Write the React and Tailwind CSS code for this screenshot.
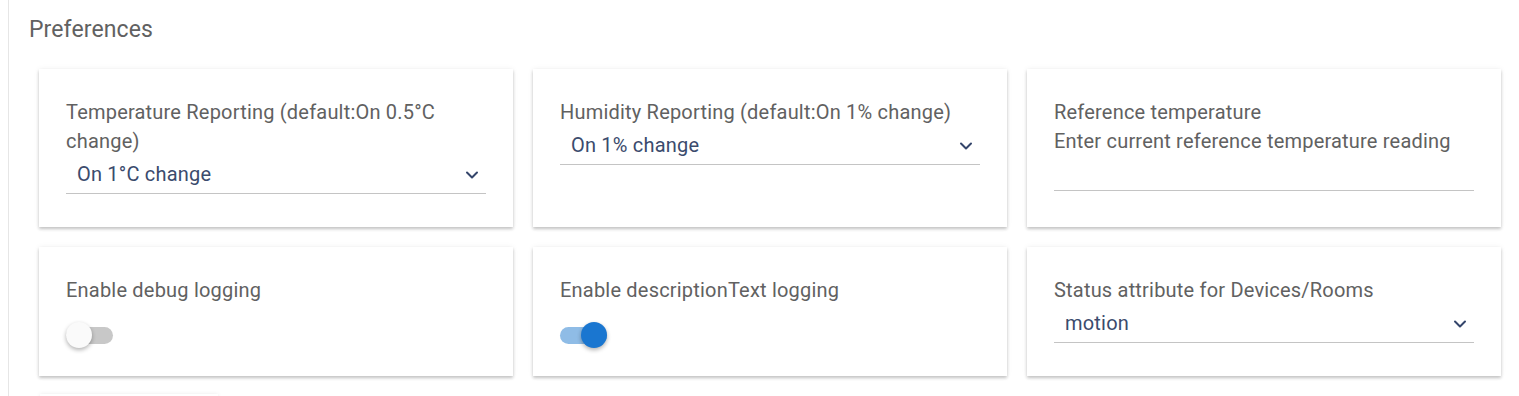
import React, { useState } from 'react'

function Chevron() {
  return (
    <svg className="w-[14px] h-[8px]" viewBox="0 0 14 8" fill="none" stroke="#34456b" strokeWidth="2" strokeLinecap="round" strokeLinejoin="round">
      <path d="M2 1.5l5 5 5-5" />
    </svg>
  )
}

function Card({ children }) {
  return (
    <div className="bg-white px-[27px] pt-[29px] pb-[33px] shadow-[0_2px_3px_rgba(0,0,0,0.22),0_0_6px_rgba(0,0,0,0.06)]">
      {children}
    </div>
  )
}

function Label({ children }) {
  return <div className="text-[20px] leading-[29px] tracking-[0.2px] text-[#616161]">{children}</div>
}

function Select({ value }) {
  return (
    <div className="flex items-center justify-between border-b border-[#c4c4c4] py-[4px] pl-[11px] pr-[7px]">
      <span className="text-[20px] leading-[29px] tracking-[0.2px] text-[#3b4b6d]">{value}</span>
      <Chevron />
    </div>
  )
}

function Toggle({ on, onChange }) {
  return (
    <button
      onClick={() => onChange(!on)}
      className="relative mt-[17px] block h-[26px] w-[47px]"
    >
      <span className={`absolute left-0 top-[4.5px] h-[17px] w-[47px] rounded-full ${on ? 'bg-[#8fbce6]' : 'bg-[#c8c8c8]'}`} />
      <span
        className={`absolute top-0 h-[26px] w-[26px] rounded-full shadow-[0_2px_4px_rgba(0,0,0,0.3)] ${on ? 'left-[21px] bg-[#1a76d0]' : 'left-0 bg-[#fafafa]'}`}
      />
    </button>
  )
}

export default function App() {
  const [debug, setDebug] = useState(false)
  const [descText, setDescText] = useState(true)

  return (
    <div className="h-[396px] w-full overflow-hidden bg-white" style={{ fontFamily: 'Roboto, "Liberation Sans", sans-serif' }}>
      <div className="ml-2 min-h-full border-l border-[#e6e6e6] pl-5 pt-[16px]">
        <h2 className="text-[23px] leading-[28px] tracking-[0.1px] text-[#616161]">Preferences</h2>

        <div className="ml-[10px] mr-[18px] mt-[25px] grid grid-cols-3 gap-x-5 gap-y-5">
          <Card>
            <Label>Temperature Reporting (default:On 0.5°C change)</Label>
            <Select value="On 1°C change" />
          </Card>
          <Card>
            <Label>Humidity Reporting (default:On 1% change)</Label>
            <Select value="On 1% change" />
          </Card>
          <Card>
            <Label>Reference temperature</Label>
            <Label>Enter current reference temperature reading</Label>
            <div className="h-[35px] border-b border-[#c4c4c4]" />
          </Card>

          <div className="bg-white px-[27px] pt-[29px] pb-[28px] shadow-[0_2px_3px_rgba(0,0,0,0.22),0_0_6px_rgba(0,0,0,0.06)]">
            <Label>Enable debug logging</Label>
            <Toggle on={debug} onChange={setDebug} />
          </div>
          <div className="bg-white px-[27px] pt-[29px] pb-[28px] shadow-[0_2px_3px_rgba(0,0,0,0.22),0_0_6px_rgba(0,0,0,0.06)]">
            <Label>Enable descriptionText logging</Label>
            <Toggle on={descText} onChange={setDescText} />
          </div>
          <Card>
            <Label>Status attribute for Devices/Rooms</Label>
            <Select value="motion" />
          </Card>
        </div>

        <div className="ml-[11px] mt-[18px] h-[40px] w-[178px] bg-white shadow-[0_0_4px_rgba(0,0,0,0.08)]" />
      </div>
    </div>
  )
}
